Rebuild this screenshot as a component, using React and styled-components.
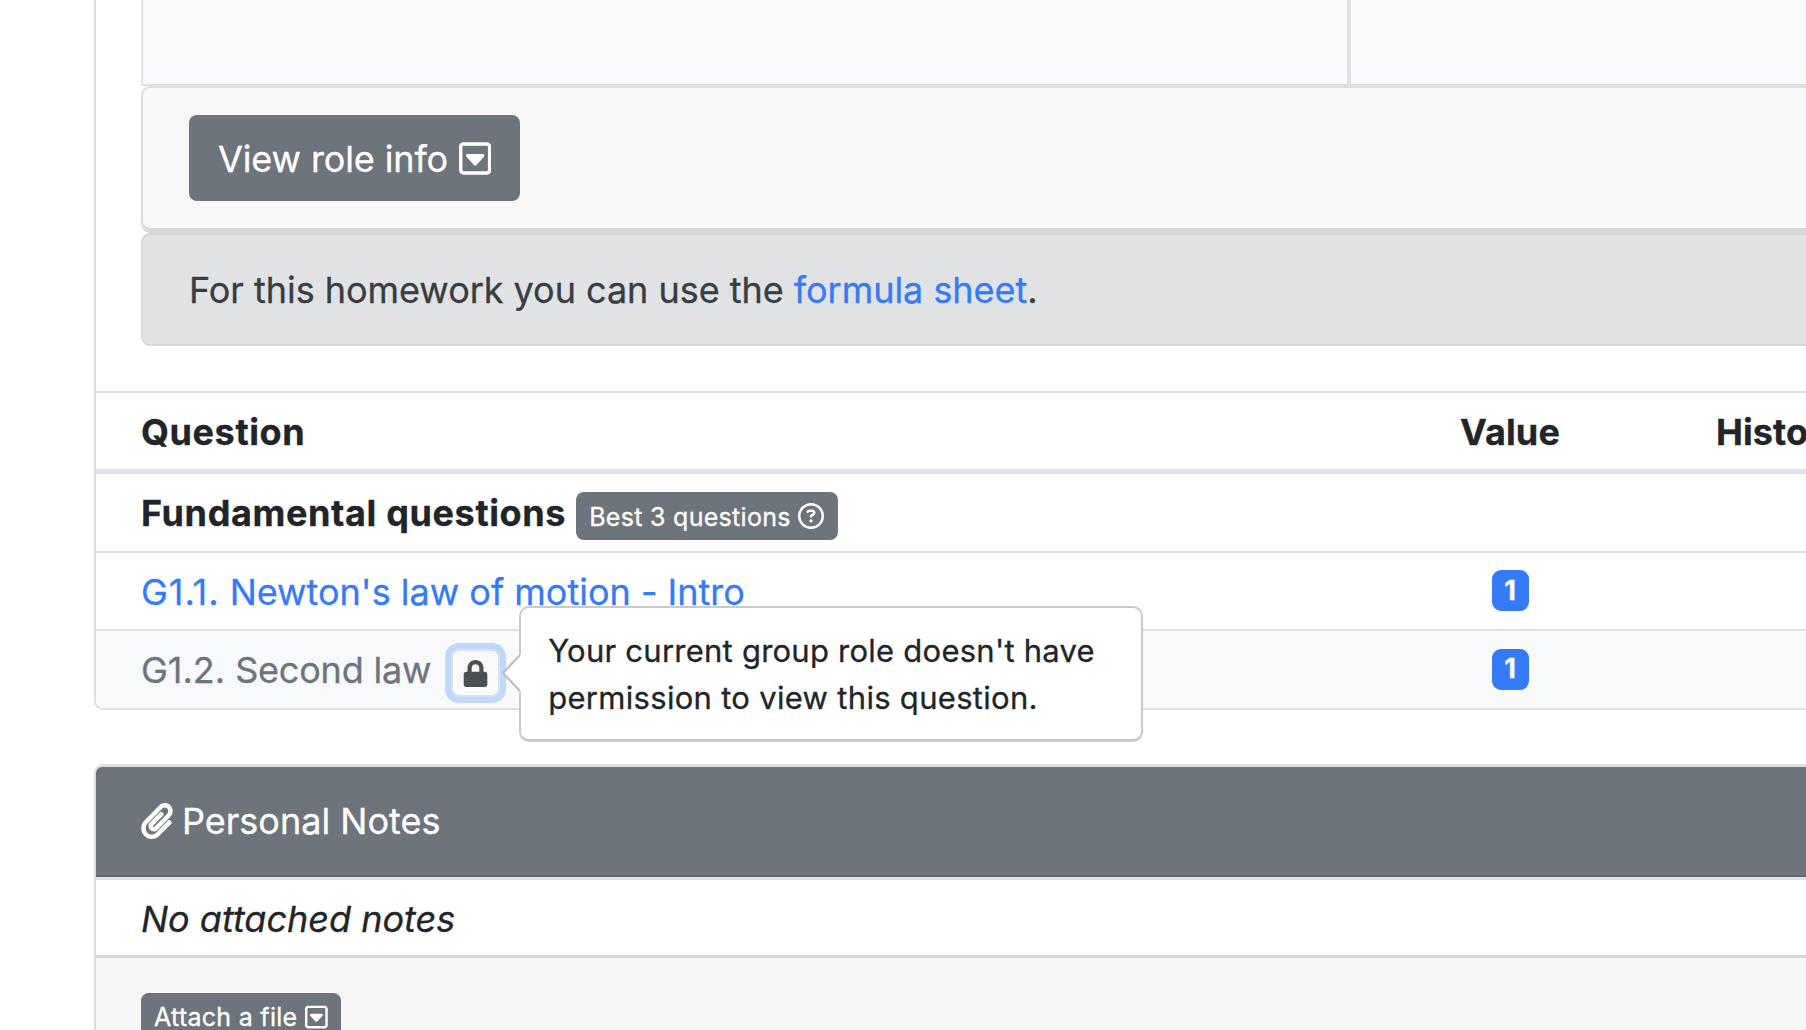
import React from "react";
import styled, { createGlobalStyle } from "styled-components";
import { FaRegSquareCaretDown, FaRegCircleQuestion } from "react-icons/fa6";
import { FaLock, FaPaperclip } from "react-icons/fa";

const Global = createGlobalStyle`
  * { box-sizing: border-box; }
  html, body { margin: 0; height: 1030px; overflow: hidden; background: #fff; }
  body {
    font-family: Inter, "Liberation Sans", sans-serif;
    font-size: 36px;
    line-height: 54px;
    color: #212529;
    font-feature-settings: "calt" 0;
    -webkit-text-stroke: 0.3px currentColor;
  }
`;

const Page = styled.main`
  width: 1806px;
  height: 1030px;
  overflow: hidden;
  padding-left: 94px;
  display: flex;
  flex-direction: column;
`;

const Card = styled.section`
  flex: none;
  width: 2200px;
  display: flex;
  flex-direction: column;
  border: solid #dfdfdf;
  border-width: ${(p) => (p.$first ? "0 2px 2px" : "3px 2px 2px")};
  border-radius: ${(p) => (p.$first ? "0 0 9px 9px" : "9px 9px 0 0")};
  margin-top: ${(p) => (p.$first ? 0 : 54)}px;
`;

const Inner = styled.div`
  padding-left: 45px;
  height: 391px;
  display: flex;
  flex-direction: column;
`;

const RoleGrid = styled.div`
  height: 86px;
  display: grid;
  grid-template-columns: 1208px 1fr;
  border: solid #dee2e6;
  border-width: 0 0 2px 2px;
`;

const RoleCell = styled.div`
  background: #f8f9fb;
  border-right: 4px solid #dee2e6;
`;

const InfoFooter = styled.div`
  height: 147px;
  padding: 27px 46px;
  background: #f7f7f7;
  border: solid #dedede;
  border-width: 2px 0 3px 2px;
  border-bottom-color: #d8d8d8;
  border-radius: 9px 0 0 9px;
  box-shadow: inset 0 -2px 0 #d8d8d8;
`;

const Button = styled.button`
  display: flex;
  align-items: center;
  border: 0;
  border-radius: 8px;
  background: #6d747c;
  color: #fff;
  font: inherit;
  font-size: ${(p) => (p.$small ? 25 : 36)}px;
  width: ${(p) => (p.$small ? 200 : 331)}px;
  height: ${(p) => (p.$small ? 56 : 86)}px;
  padding: ${(p) => (p.$small ? "0 13px 8px" : "0 29px")};
  justify-content: space-between;
  white-space: nowrap;
`;

const CaretIcon = styled(FaRegSquareCaretDown)`
  flex: none;
  width: ${(p) => (p.size * 7) / 8}px;
  height: ${(p) => p.size}px;
`;

const ClipIcon = styled(FaPaperclip)`
  flex: none;
  width: 32px;
  height: 36px;
`;

const Text = styled.span`
  display: inline-block;
  padding-top: ${(p) => (p.$drop ? 2 : 0)}px;
  letter-spacing: ${(p) => p.$ls || 0}px;
  white-space: pre;
`;

const Alert = styled.div`
  height: 113px;
  display: flex;
  align-items: center;
  padding: 0 46px;
  background: #e1e2e4;
  border: 2px solid #d6d8db;
  border-radius: 9px;
  color: #383d41;
`;

const Link = styled.a`
  color: #357af6;
  text-decoration: none;
`;

const Row = styled.div`
  height: ${(p) => p.$h}px;
  display: grid;
  grid-template-columns: 1210px 318px 1fr;
  align-items: center;
  padding-left: 45px;
  border-top: ${(p) => p.$top || 2}px solid #dee2e6;
  background: ${(p) => (p.$muted ? "#f8f9fb" : "#fff")};
  color: ${(p) => (p.$muted ? "#6d747c" : "#212529")};
  font-weight: ${(p) => (p.$bold ? 700 : 400)};
  border-radius: ${(p) => (p.$muted ? "0 0 0 8px" : "0")};
`;

const NameCell = styled.div`
  display: flex;
  align-items: center;
`;

const ValueCell = styled.div`
  display: flex;
  justify-content: center;
`;

const HistoryCell = styled.div`
  display: flex;
  padding-left: 47px;
`;

const Best = styled.span`
  display: flex;
  align-items: center;
  justify-content: space-between;
  width: 262px;
  height: 48px;
  margin: 6px 0 0 10px;
  padding: 0 14px 0 13px;
  border-radius: 8px;
  background: #6d747c;
  color: #fff;
  font-size: 25px;
  font-weight: 400;
`;

const Points = styled.span`
  display: flex;
  align-items: center;
  justify-content: center;
  width: 37px;
  height: 41px;
  margin-top: -1px;
  border-radius: 9px;
  background: #357af6;
  color: #fff;
  font-size: 27px;
  font-weight: 700;
`;

const LockButton = styled.button`
  position: relative;
  display: flex;
  align-items: center;
  justify-content: center;
  width: 49px;
  height: 48px;
  margin: 7px 0 0 20px;
  padding: 0;
  border: 2px solid #dee2e6;
  border-radius: 8px;
  background: #f8f9fa;
  color: #4b5055;
  box-shadow: 0 0 0 6px #bfd7f8;
`;

const Popover = styled.div`
  position: absolute;
  left: 66px;
  top: -45px;
  width: 624px;
  height: 136px;
  padding: 19px 27px;
  background: #fff;
  border: 2px solid #c9c9c9;
  border-bottom-width: 3px;
  border-radius: 10px;
  color: #212529;
  font-family: Inter, "Liberation Sans", sans-serif;
  font-size: 31px;
  line-height: 47px;
  text-align: left;
  display: flex;
  flex-direction: column;
`;

const Arrow = styled.svg`
  position: absolute;
  left: -20px;
  top: 46px;
`;

const NotesHeader = styled.header`
  height: 110px;
  display: flex;
  align-items: center;
  gap: 9px;
  padding-left: 45px;
  color: #fff;
  background: #6d747c;
  border-bottom: 2px solid #5f646d;
  border-radius: 6px 0 0 0;
`;

const NotesBody = styled.div`
  height: 78px;
  display: flex;
  align-items: center;
  padding-left: 45px;
  border-top: 3px solid #dee2e6;
  font-style: italic;
`;

const NotesFooter = styled.footer`
  height: 120px;
  padding: 35px 45px;
  border-top: 3px solid #d7d7d7;
  background: #f6f6f6;
`;

function QuestionRow({ children, points, muted, h }) {
  return (
    <Row $h={h} $muted={muted}>
      <NameCell>{children}</NameCell>
      <ValueCell><Points>{points}</Points></ValueCell>
      <HistoryCell />
    </Row>
  );
}

export default function App() {
  return (
    <>
      <Global />
      <Page>
        <Card $first>
          <Inner>
            <RoleGrid><RoleCell /><RoleCell /></RoleGrid>
            <InfoFooter>
              <Button><Text $drop $ls={-0.12}>View role info</Text><CaretIcon size={37} /></Button>
            </InfoFooter>
            <Alert>
              <Text $ls={-0.03}>For this homework you can use the <Link>formula sheet</Link>.</Text>
            </Alert>
          </Inner>
          <Row $h={78} $bold>
            <Text $drop $ls={0.6}>Question</Text>
            <ValueCell><Text $drop $ls={0.15}>Value</Text></ValueCell>
            <HistoryCell><Text $drop $ls={0.1}>History</Text></HistoryCell>
          </Row>
          <Row $h={82} $top={5} $bold>
            <NameCell>
              <Text $ls={0.63}>Fundamental questions</Text>
              <Best><Text $drop $ls={0.3}>Best 3 questions</Text><FaRegCircleQuestion size={26} /></Best>
            </NameCell>
          </Row>
          <QuestionRow h={78} points={1}>
            <Link><Text $drop $ls={0.95}>G1.1.</Text><Text $drop> Newton's law of motion - Intro</Text></Link>
          </QuestionRow>
          <QuestionRow h={79} points={1} muted>
            <Text>G1.2.</Text><Text $ls={-0.2}> Second law</Text>
            <LockButton aria-label="Locked">
              <FaLock size={27} />
              <Popover>
                <Arrow width="20" height="38" viewBox="0 0 20 38">
                  <path d="M20 0L2 19L20 38Z" fill="#fff" />
                  <path d="M19 1L2 19L19 37" fill="none" stroke="#b9bcc0" strokeWidth="2" />
                </Arrow>
                <Text $ls={0.24}>Your current group role doesn't have</Text>
                <Text $ls={0.3}>permission to view this question.</Text>
              </Popover>
            </LockButton>
          </QuestionRow>
        </Card>
        <Card>
          <NotesHeader><ClipIcon /><Text>Personal Notes</Text></NotesHeader>
          <NotesBody><Text $drop>No attached notes</Text></NotesBody>
          <NotesFooter>
            <Button $small><Text $ls={0.28}>Attach a file</Text><CaretIcon size={26} /></Button>
          </NotesFooter>
        </Card>
      </Page>
    </>
  );
}
